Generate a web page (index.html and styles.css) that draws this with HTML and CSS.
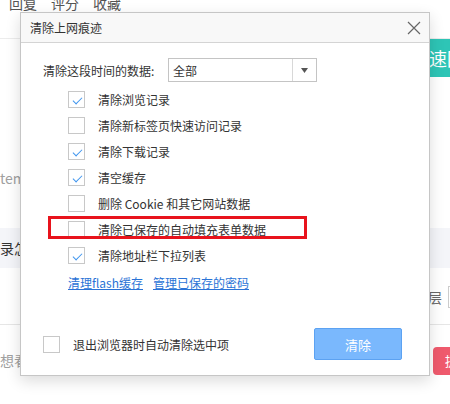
FILE: index.html
```html
<!DOCTYPE html>
<html lang="zh-CN">
<head>
<meta charset="utf-8">
<link rel="stylesheet" href="styles.css">
</head>
<body>
<div class="page">
  <div class="nav"><span>回复</span><span>评分</span><span>收藏</span></div>
  <div class="row r-teal"><div class="teal">快速回复</div></div>
  <div class="row r-tem"><span class="gray">tem</span></div>
  <div class="row r-band"><span class="dark">录怎</span></div>
  <div class="row r-floor"><span class="floor">层</span><span class="inputbox"></span></div>
  <div class="row r-last"><span class="gray">想看该</span><span class="redbtn">提</span></div>

  <div class="dialog">
    <div class="dlg-title">
      <span>清除上网痕迹</span>
      <svg class="close" width="14" height="14" viewBox="0 0 14 14"><path d="M1 1L13 13M13 1L1 13" stroke="#666" stroke-width="1.2" fill="none"/></svg>
    </div>
    <div class="dlg-body">
      <div class="range">
        <span class="range-label">清除这段时间的数据:</span>
        <div class="select"><span class="sel-text">全部</span><span class="sel-arrow"><svg width="7" height="5" viewBox="0 0 7 5"><path d="M0 0H7L3.5 5Z" fill="#555"/></svg></span></div>
      </div>
      <ul class="opts">
        <li class="opt"><span class="cb on"></span>清除浏览记录</li>
        <li class="opt"><span class="cb"></span>清除新标签页快速访问记录</li>
        <li class="opt"><span class="cb on"></span>清除下载记录</li>
        <li class="opt"><span class="cb on"></span>清空缓存</li>
        <li class="opt"><span class="cb"></span>删除 Cookie 和其它网站数据</li>
        <li class="opt hl"><span class="cb"></span>清除已保存的自动填充表单数据<span class="redbox"></span></li>
        <li class="opt"><span class="cb on"></span>清除地址栏下拉列表</li>
      </ul>
      <div class="links"><a>清理flash缓存</a><a>管理已保存的密码</a></div>
    </div>
    <div class="dlg-foot">
      <label class="auto"><span class="cb"></span>退出浏览器时自动清除选中项</label>
      <button class="clear">清除</button>
    </div>
  </div>
</div>
</body>
</html>
```
FILE: styles.css
```css
* { box-sizing: border-box; }
html, body { margin: 0; padding: 0; }
body {
  width: 450px; height: 404px; overflow: hidden; background: #fff;
  font-family: "Noto Sans CJK SC", "Noto Sans", sans-serif; font-size: 12px; color: #333;
}
.page { position: relative; width: 450px; height: 404px; overflow: hidden; }

.nav { height: 39px; border-bottom: 1px solid #ececec; display: flex; gap: 14px; padding-left: 9px; font-size: 14px; line-height: 14px; color: #555; }
.nav span { margin-top: -4px; }
.row { display: flex; align-items: center; white-space: nowrap; }
.r-teal { height: 38px; }
.teal { margin-left: 411px; width: 60px; height: 38px; background: #2ec5b6; color: #fff; font-size: 18px; line-height: 38px; overflow: hidden; flex: none; }
.r-tem { height: 14px; margin-top: 94px; }
.gray { color: #a0a0a0; font-size: 14px; }
.dark { color: #333; font-size: 14px; }
.r-band { height: 40px; margin-top: 43px; background: #f4f5f9; }
.r-floor { height: 57px; border-bottom: 1px solid #e6e6e6; }
.floor { margin-left: 428px; color: #666; font-size: 14px; margin-top: 2px; }
.inputbox { width: 20px; height: 22px; border: 1px solid #ccc; margin-left: 6px; flex: none; margin-top: 2px; }
.r-last { height: 77px; align-items: flex-start; }
.r-last .gray { margin-top: 26px; line-height: 18px; }
.redbtn { margin-left: auto; margin-right: -6px; width: 23px; height: 28px; background: #ef5a6d; border-radius: 4px; color: #fff; font-size: 13px; line-height: 28px; padding-left: 12px; flex: none; margin-top: 22px; overflow: hidden; }

.dialog {
  position: absolute; left: 20px; top: 12px; width: 410px; height: 364px;
  background: #fff; border: 1px solid #c6c6c6;
  box-shadow: 0 5px 14px rgba(0,0,0,0.14);
  display: flex; flex-direction: column;
}
.dlg-title { height: 30px; background: #f8f8f8; border-bottom: 1px solid #d4d4d4; display: flex; align-items: center; justify-content: space-between; padding: 0 8px 0 9px; color: #333; font-size: 12px; flex: none; }
.dlg-body { padding: 15px 0 0 22px; }
.range { display: flex; align-items: center; height: 24px; }
.range-label { width: 125px; }
.select { width: 149px; height: 24px; border: 1px solid #c4c4c4; display: flex; align-items: center; }
.sel-text { flex: 1; padding-left: 4px; }
.sel-arrow { width: 24px; height: 22px; border-left: 1px solid #d8d8d8; display: flex; align-items: center; justify-content: center; }
.opts { list-style: none; margin: 4px 0 0 25px; padding: 0; }
.opt { position: relative; height: 26px; display: flex; align-items: center; }
.cb { width: 17px; height: 17px; border: 1px solid #c8c8c8; background: #fff; margin-right: 13px; flex: none; position: relative; }
.cb.on::after {
  content: ""; position: absolute; left: 4px; top: 2px; width: 8px; height: 4px;
  border-left: 1px solid #3f95ee; border-bottom: 1px solid #3f95ee;
  transform: translate(0, 3px) rotate(-45deg); transform-origin: center;
}
.redbox { position: absolute; left: -20px; top: 0; width: 259px; height: 23px; border: 3px solid #e8131c; }
.links { margin: 4px 0 0 25px; height: 20px; display: flex; align-items: center; gap: 10px; }
.links a { color: #2a73d6; text-decoration: underline; cursor: pointer; }
.dlg-foot { margin-top: auto; display: flex; align-items: center; justify-content: space-between; padding: 0 27px 15px 22px; }
.auto { display: flex; align-items: center; }
.clear { width: 88px; height: 32px; background: #7ab8fd; border: 1px solid #5ca2f2; border-radius: 2px; color: #fff; font-family: inherit; font-size: 13px; padding: 0; }
```
